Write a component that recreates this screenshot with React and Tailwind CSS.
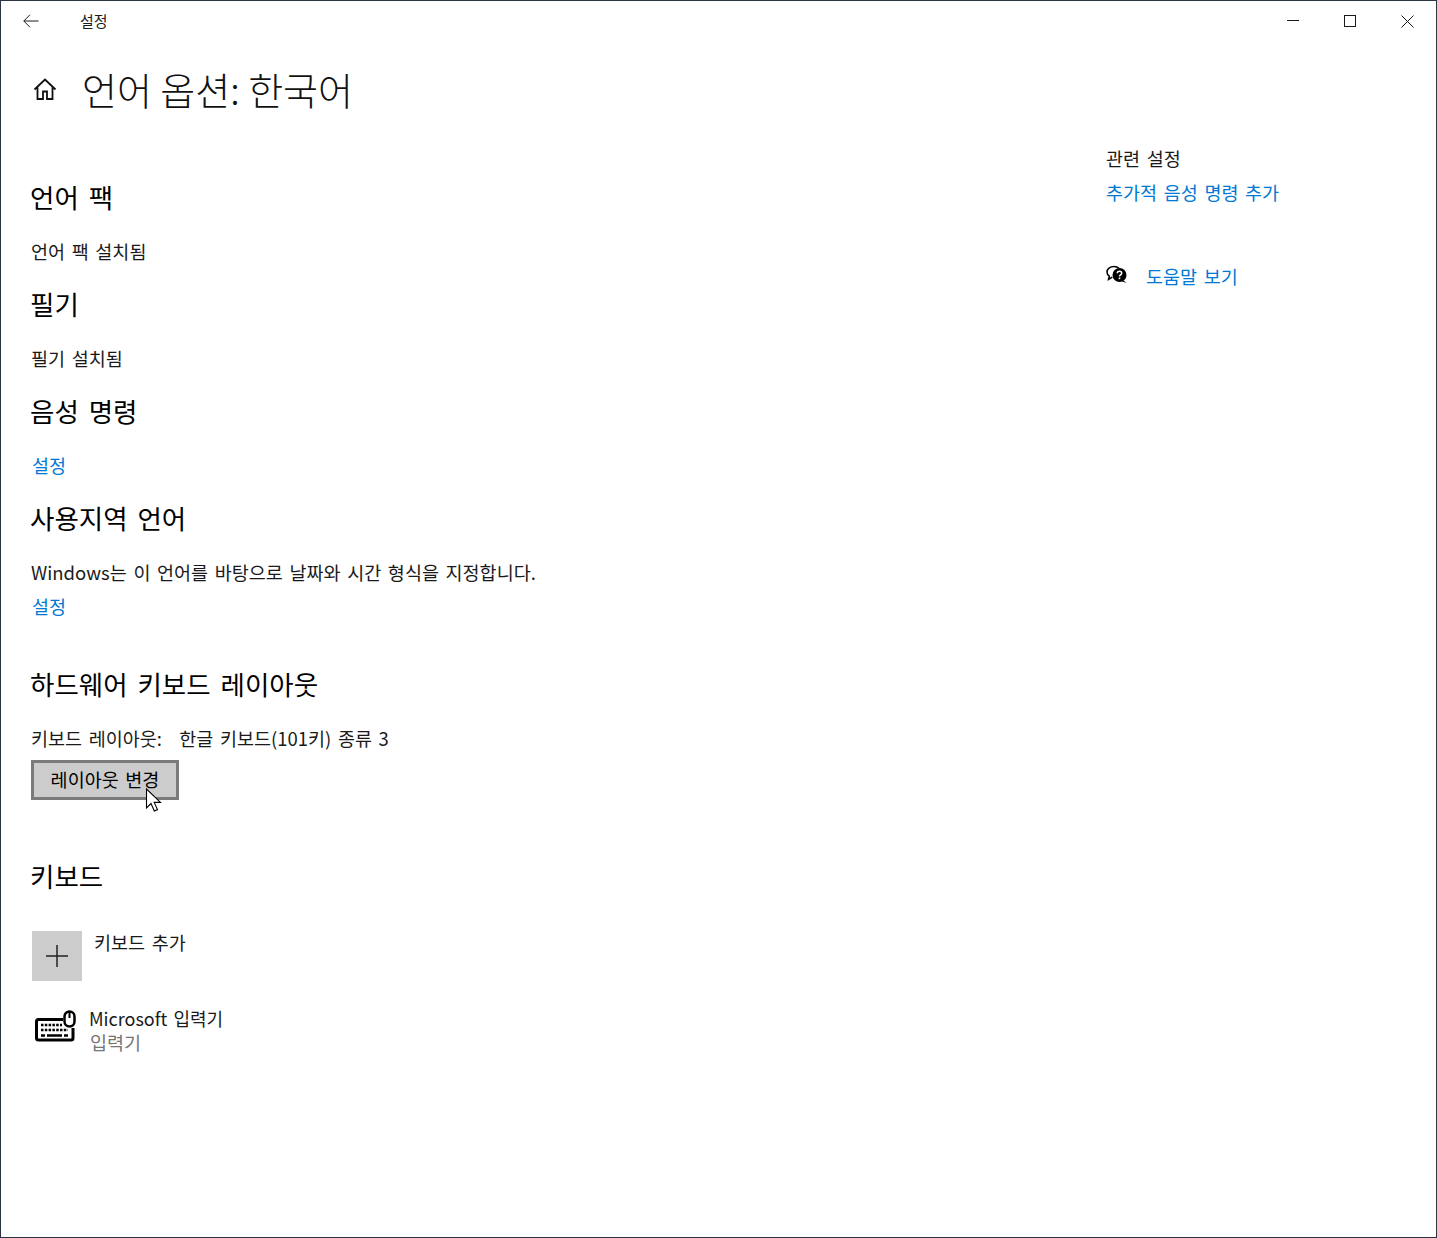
import React from 'react';

const font = { fontFamily: '"Noto Sans CJK KR", "Noto Sans", sans-serif' };

function Heading({ children, className = '' }) {
  return <h2 className={`h-[36px] text-[26.5px] leading-[36px] text-black [word-spacing:4px] ${className}`}>{children}</h2>;
}

function Body({ children, className = '' }) {
  return <p className={`h-[26px] pl-px text-[18.5px] leading-[26px] text-[#1a1a1a] [word-spacing:2.5px] ${className}`}>{children}</p>;
}

function Link({ children, className = '' }) {
  return <a className={`block text-[18.5px] leading-[26px] text-[#0078d4] [word-spacing:2.5px] ${className}`}>{children}</a>;
}

function ChatHelpIcon() {
  return (
    <svg width="24" height="24" viewBox="0 0 24 24" className="shrink-0">
      <path d="M9 2.500c-4 0-7 2.400-7 5.500 0 1.700.9 3.200 2.300 4.200L3.500 15.500l3.800-2.300" fill="none" stroke="#000" strokeWidth="1.500" />
      <path d="M9 2.500c2 0 3.800.6 5 1.700" fill="none" stroke="#000" strokeWidth="1.500" />
      <circle cx="14.500" cy="11" r="7" fill="#000" />
      <path d="M18 16l3.500 3-5.500-2z" fill="#000" />
      <path d="M12.300 9.300c0-1.300 1-2 2.200-2s2.200.7 2.200 1.900c0 1.700-2.200 1.700-2.200 3.300" fill="none" stroke="#fff" strokeWidth="1.500" />
      <rect x="13.700" y="13.500" width="1.600" height="1.700" fill="#fff" />
    </svg>
  );
}

function KeyboardIcon() {
  return (
    <svg width="42" height="34" viewBox="0 0 42 34" className="mt-[3px] shrink-0">
      <path d="M28 9.500H3.500a2 2 0 0 0-2 2V28a2 2 0 0 0 2 2H36a2 2 0 0 0 2-2V18" fill="none" stroke="#000" strokeWidth="3" />
      <rect x="29.500" y="1.500" width="10" height="15" rx="5" fill="#fff" stroke="#000" strokeWidth="2.500" />
      <path d="M34.500 2v6" stroke="#000" strokeWidth="2" />
      <path d="M6 15h21M6 20h27" stroke="#000" strokeWidth="2.500" strokeDasharray="2.500 1.300" />
      <path d="M6 25.500h4M12 25.500h15M29 25.500h4" stroke="#000" strokeWidth="2.500" />
    </svg>
  );
}

export default function App() {
  return (
    <div style={font} className="box-border flex h-[1238px] w-full flex-col border border-[#2b3440] bg-white">
      <header className="flex h-[40px] shrink-0 items-center text-black">
        <button className="flex h-[40px] w-[60px] items-center justify-center">
          <svg width="16" height="14" viewBox="0 0 16 14" fill="none" stroke="#1a1a1a" strokeWidth="1">
            <path d="M15.500 7H.800M7 .7.800 7 7 13.300" />
          </svg>
        </button>
        <span className="ml-[19px] text-[15px] leading-[20px] text-[#1a1a1a]">설정</span>
        <div className="ml-auto flex h-full">
          <span className="flex w-[57px] items-center justify-center">
            <svg width="12" height="2" viewBox="0 0 12 2"><path d="M0 .5h12" stroke="#1a1a1a" /></svg>
          </span>
          <span className="flex w-[57px] items-center justify-center">
            <svg width="12" height="12" viewBox="0 0 12 12" fill="none"><rect x=".5" y=".5" width="11" height="11" stroke="#1a1a1a" /></svg>
          </span>
          <span className="flex w-[58px] items-center justify-center pl-px">
            <svg width="13" height="13" viewBox="0 0 13 13" fill="none"><path d="M.5.500l12 12M12.500.500l-12 12" stroke="#1a1a1a" /></svg>
          </span>
        </div>
      </header>

      <div className="flex flex-1">
        <main className="flex-1 pl-[29px]">
          <div className="mt-[17px] flex h-[60px] items-center pt-px">
            <svg width="26" height="26" viewBox="0 0 26 26" fill="none" stroke="#111" strokeWidth="1.800" className="ml-[2px] shrink-0">
              <path d="M2.500 13.500 13 3.500l10.500 10M5.500 11.500V23h5.500v-7.500h4V23h5.500V11.500" />
            </svg>
            <h1 className="ml-[24px] text-[38px] font-light leading-[60px] text-[#111]">언어 옵션: 한국어</h1>
          </div>

          <Heading className="mt-[61px]">언어 팩</Heading>
          <Body className="mt-[23px] pl-[2px]">언어 팩 설치됨</Body>
          <Heading className="mt-[22px]">필기</Heading>
          <Body className="mt-[23px] pl-[2px]">필기 설치됨</Body>
          <Heading className="mt-[22px]">음성 명령</Heading>
          <Link className="mt-[23px] pl-[2px]">설정</Link>
          <Heading className="mt-[22px]">사용지역 언어</Heading>
          <Body className="mt-[23px]">Windows는 이 언어를 바탕으로 날짜와 시간 형식을 지정합니다.</Body>
          <Link className="mt-[8px] pl-[2px]">설정</Link>
          <Heading className="mt-[47px]">하드웨어 키보드 레이아웃</Heading>
          <Body className="mt-[23px] whitespace-pre">키보드 레이아웃:  <span className="ml-[4px]">한글 키보드(101키) 종류 3</span></Body>
          <div className="relative ml-px mt-[9px] w-fit">
            <button className="box-border h-[40px] w-[148px] border-[3px] border-[#7a7a7a] bg-[#cccccc] text-[18.5px] text-black [word-spacing:2.5px]">레이아웃 변경</button>
            <svg width="18" height="26" viewBox="0 0 18 26" className="absolute left-[114px] top-[28px]">
              <path d="M1.500 1v19l4.500-4.500 3.300 7.500 3.200-1.400-3.300-7.200H15.500z" fill="#fff" stroke="#000" strokeWidth="1.100" />
            </svg>
          </div>

          <Heading className="mt-[58px]">키보드</Heading>
          <div className="ml-[2px] mt-[37px] flex items-start">
            <div className="flex h-[50px] w-[50px] items-center justify-center bg-[#cccccc]">
              <svg width="22" height="22" viewBox="0 0 22 22" stroke="#222" strokeWidth="1.500"><path d="M11 0v22M0 11h22" /></svg>
            </div>
            <span className="ml-[12px] text-[18.5px] leading-[22px] text-[#1a1a1a] [word-spacing:2.5px]">키보드 추가</span>
          </div>
          <div className="ml-[5px] mt-[26px] flex items-start">
            <KeyboardIcon />
            <div className="ml-[12px]">
              <div className="text-[18px] leading-[23px] text-[#1a1a1a] [word-spacing:2px]">Microsoft 입력기</div>
              <div className="pl-px text-[18.5px] leading-[24px] text-[#767676]">입력기</div>
            </div>
          </div>
        </main>

        <aside className="w-[331px] shrink-0 pt-[100px]">
          <div className="pl-px text-[18.5px] leading-[34px] text-[#1a1a1a] [word-spacing:2.5px]">관련 설정</div>
          <Link className="pl-px leading-[34px]">추가적 음성 명령 추가</Link>
          <div className="mt-[51px] flex items-center">
            <ChatHelpIcon />
            <Link className="ml-[17px] leading-[32px]">도움말 보기</Link>
          </div>
        </aside>
      </div>
    </div>
  );
}
